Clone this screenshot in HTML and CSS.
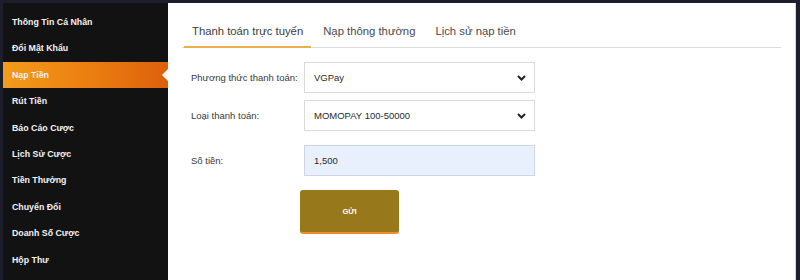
FILE: index.html
```html
<!DOCTYPE html>
<html lang="vi">
<head>
<meta charset="utf-8">
<title>Nạp Tiền</title>
<link rel="stylesheet" href="styles.css">
</head>
<body>
<div class="frame">
  <aside class="sidebar">
    <ul class="menu">
      <li class="menu-item">Thông Tin Cá Nhân</li>
      <li class="menu-item">Đổi Mật Khẩu</li>
      <li class="menu-item active">Nạp Tiền</li>
      <li class="menu-item">Rút Tiền</li>
      <li class="menu-item">Báo Cáo Cược</li>
      <li class="menu-item">Lịch Sử Cược</li>
      <li class="menu-item">Tiền Thưởng</li>
      <li class="menu-item">Chuyển Đổi</li>
      <li class="menu-item">Doanh Số Cược</li>
      <li class="menu-item">Hộp Thư</li>
    </ul>
  </aside>
  <main class="content">
    <nav class="tabs">
      <span class="tab active">Thanh toán trực tuyến</span>
      <span class="tab">Nạp thông thường</span>
      <span class="tab">Lịch sử nạp tiền</span>
    </nav>
    <form class="form">
      <div class="row">
        <label class="label">Phương thức thanh toán:</label>
        <div class="field select">
          <span>VGPay</span>
          <svg class="chev" width="9" height="6" viewBox="0 0 9 6"><path d="M1 1 L4.5 4.5 L8 1" fill="none" stroke="#222" stroke-width="2"/></svg>
        </div>
      </div>
      <div class="row">
        <label class="label">Loại thanh toán:</label>
        <div class="field select">
          <span>MOMOPAY 100-50000</span>
          <svg class="chev" width="9" height="6" viewBox="0 0 9 6"><path d="M1 1 L4.5 4.5 L8 1" fill="none" stroke="#222" stroke-width="2"/></svg>
        </div>
      </div>
      <div class="row row-gap">
        <label class="label">Số tiền:</label>
        <div class="field input">1,500</div>
      </div>
      <button type="button" class="submit">GỬI</button>
    </form>
  </main>
</div>
</body>
</html>
```
FILE: styles.css
```css
html, body {
  margin: 0;
  height: 280px;
  overflow: hidden;
}
body {
  background: #1c1f2b;
  font-family: "Liberation Sans", Arial, sans-serif;
}
.frame {
  display: flex;
  height: 280px;
  box-sizing: border-box;
  padding: 3px 4px 0 3px;
}
.sidebar {
  width: 165px;
  background: #121212;
  padding-top: 6px;
  flex: none;
}
.menu {
  list-style: none;
  margin: 0;
  padding: 0;
}
.menu-item {
  height: 26.4px;
  line-height: 26.4px;
  padding-left: 9px;
  color: #f2f2f2;
  font-size: 8.8px;
  font-weight: bold;
  position: relative;
}
.menu-item.active {
  background: linear-gradient(90deg, #f39c1a 0%, #ea7d10 55%, #dd600c 100%);
}
.menu-item.active::after {
  content: "";
  position: absolute;
  right: 0;
  top: 50%;
  margin-top: -6px;
  border-right: 6px solid #fff;
  border-top: 6px solid transparent;
  border-bottom: 6px solid transparent;
}
.content {
  flex: 1;
  background: #fff;
  padding-top: 14px;
  border-right: 1px solid #d8d8d8;
}
.tabs {
  display: flex;
  margin: 0 14px;
  padding-left: 2px;
  border-bottom: 1px solid #dcdcdc;
}
.tab {
  padding: 6px 8px 7px;
  margin-right: 4px;
  margin-bottom: -1px;
  line-height: 16px;
  font-size: 11.3px;
  color: #4a4a4a;
  border-bottom: 2px solid transparent;
}
.tab.active {
  border-bottom-color: #eab04a;
  color: #3c3c3c;
}
.form {
  margin: 14px 0 0 23px;
}
.row {
  display: flex;
  align-items: center;
  margin-bottom: 7px;
}
.row-gap {
  margin-top: 14px;
  margin-bottom: 14px;
}
.label {
  width: 113px;
  font-size: 9.5px;
  color: #3a3a3a;
}
.field {
  width: 231px;
  height: 31px;
  box-sizing: border-box;
  border: 1px solid #dadada;
  padding: 0 8px 0 9px;
  font-size: 9.5px;
  color: #2a2a2a;
  display: flex;
  align-items: center;
}
.select {
  justify-content: space-between;
}
.input {
  background: #e8f0fe;
  border-color: #cfd6e2;
}
.chev {
  display: block;
}
.submit {
  display: block;
  margin-left: 109px;
  width: 99px;
  height: 44px;
  border: none;
  border-bottom: 2px solid #f08c2a;
  border-radius: 3px;
  background: #97791c;
  color: #fff;
  font-family: "Liberation Sans", Arial, sans-serif;
  font-size: 7.5px;
  font-weight: bold;
  padding: 0;
}
```
